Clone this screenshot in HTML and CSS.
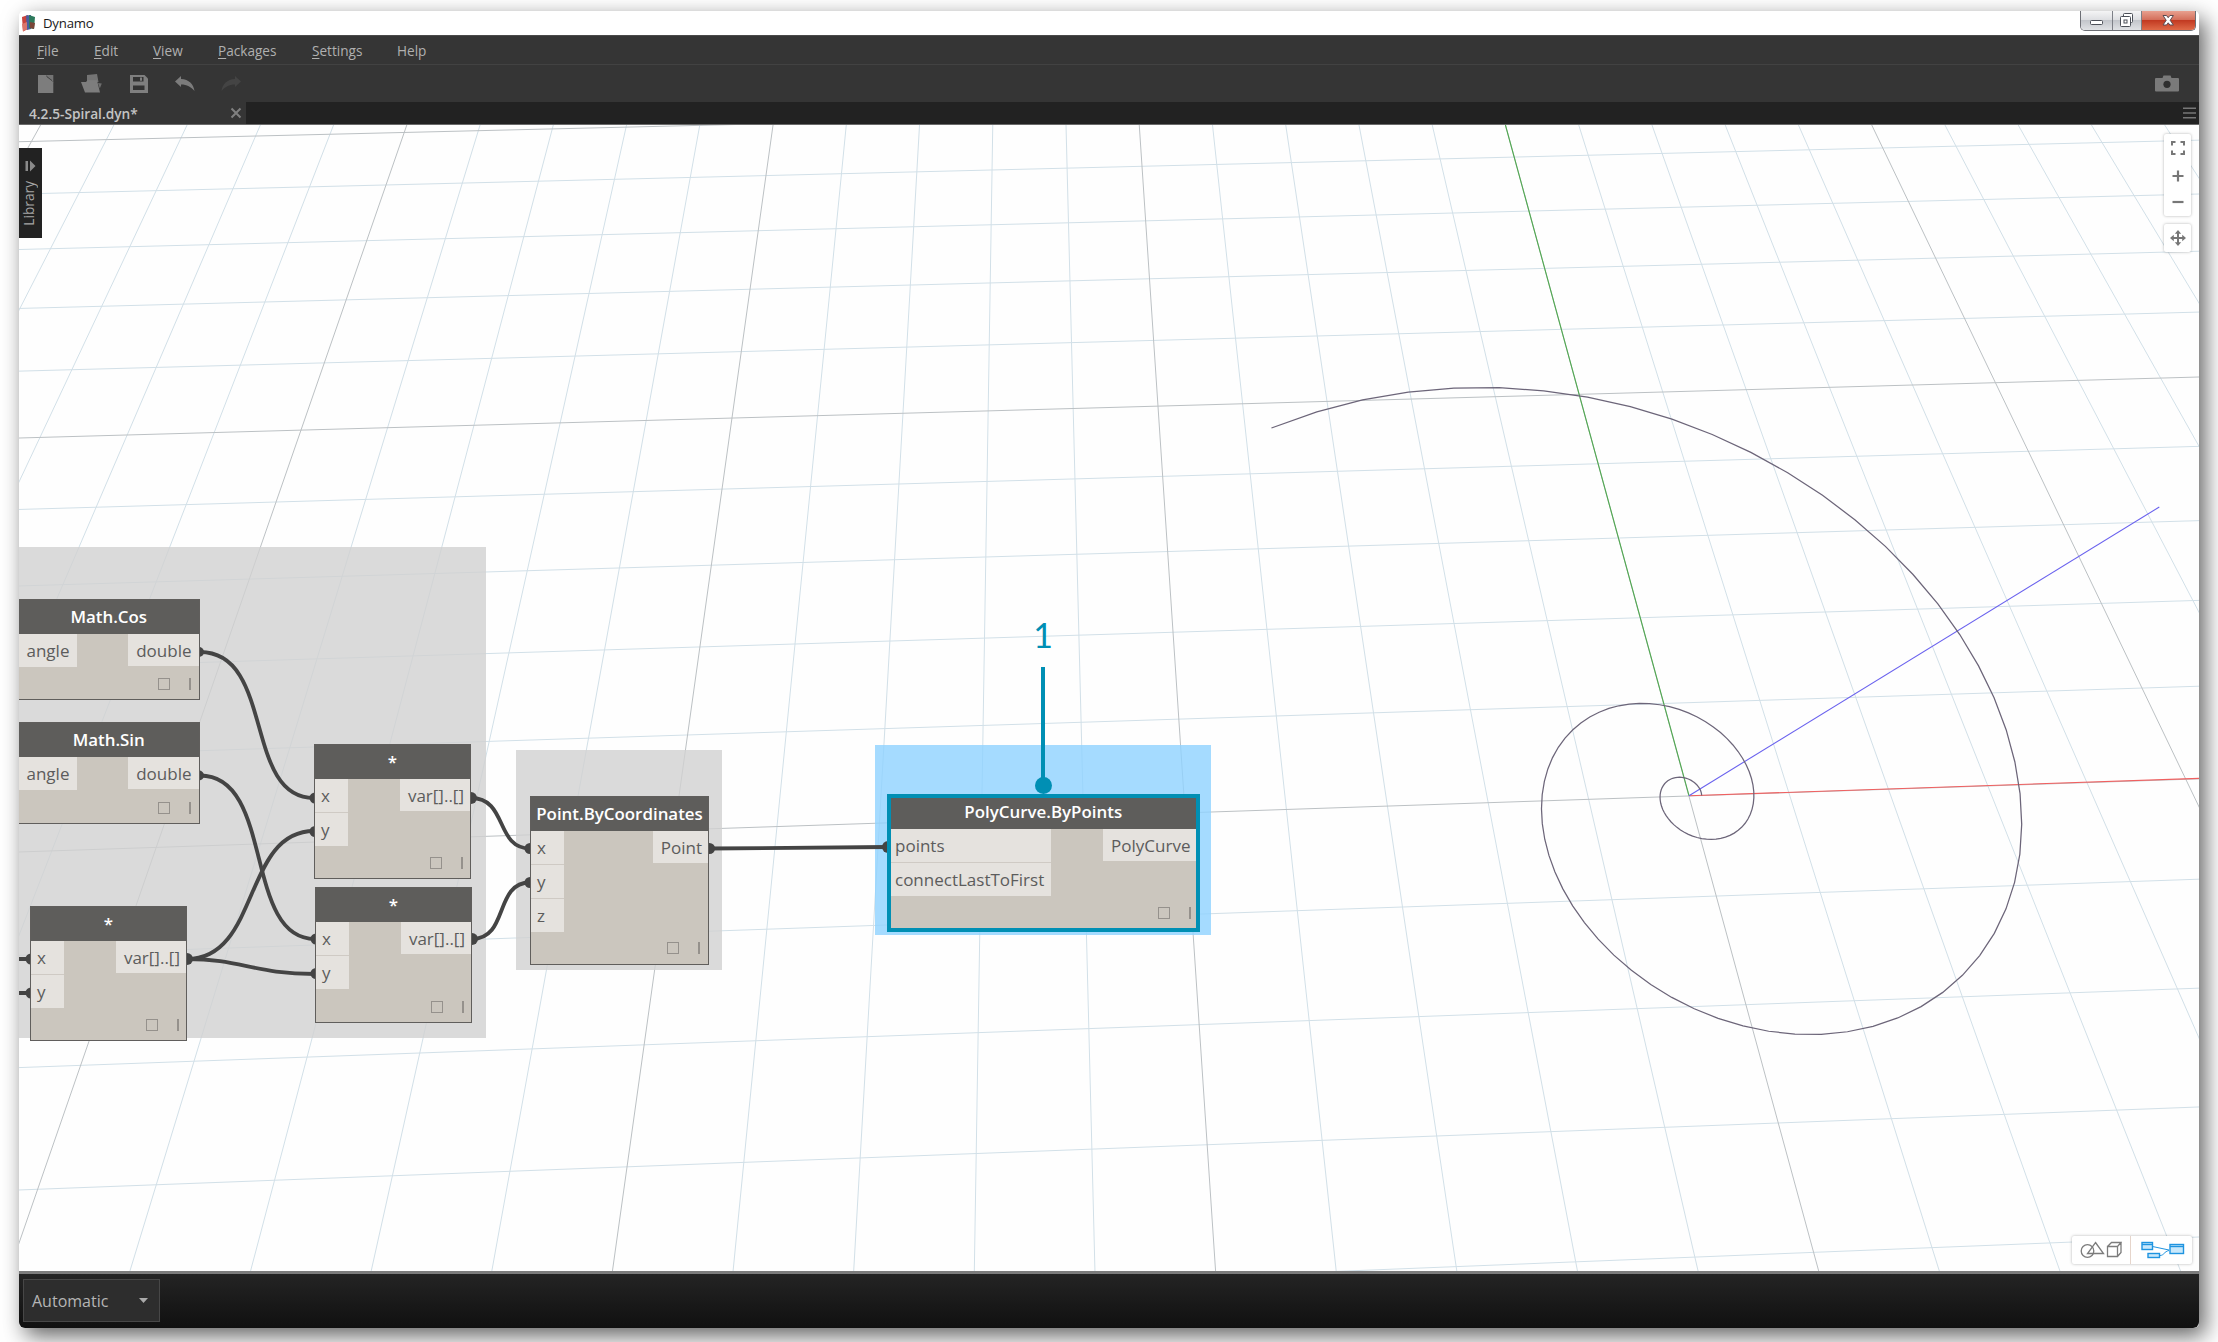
FILE: index.html
```html
<!DOCTYPE html>
<html lang="en">
<head>
<meta charset="utf-8">
<title>Dynamo</title>
<link rel="stylesheet" href="styles.css">
</head>
<body>
<div class="window">
  <header class="titlebar">
    <svg class="app-icon" width="16" height="18" viewBox="0 0 16 18">
      <path d="M1 3 7 1v14l-5 2.500z" fill="#c8433c"/>
      <path d="M5 1.500 10 1v14l-4 1z" fill="#4a5fa0"/>
      <path d="M8 1l6 2-1 12-5-1z" fill="#2d7a5c"/>
      <path d="M1 10l5-2v7l-4 2.500z" fill="#d9756a"/>
      <path d="M9 8l5 1-1 6-4-1z" fill="#7a4538"/>
    </svg>
    <span class="app-name">Dynamo</span>
    <div class="window-buttons">
      <span class="wb wb-min"><svg width="31" height="19" viewBox="1 0 31 19"><rect x="10.500" y="9.500" width="12" height="4" rx="1" fill="#fff" stroke="#4c5058"/></svg></span>
      <span class="wb wb-max"><svg width="28" height="19" viewBox="0 0 28 19"><rect x="10.500" y="2.500" width="9" height="9" rx="1" fill="#fff" stroke="#4c5058"/><rect x="7.500" y="5.500" width="10" height="10" rx="1" fill="#fff" stroke="#4c5058"/><rect x="11" y="9" width="3" height="3" fill="#fff" stroke="#4c5058"/></svg></span>
      <span class="wb wb-close"><svg width="53" height="19" viewBox="1 0 53 19"><path d="M22 4.500h3.500l1.700 2.200 1.700-2.200h3.500l-3.200 4.800 3.200 4.700h-3.500l-1.700-2.200-1.700 2.200H22l3.200-4.700z" fill="#fff" stroke="#5a4a50"/></svg></span>
    </div>
  </header>
  <nav class="menubar">
    <span class="m-file"><u>F</u>ile</span>
    <span class="m-edit"><u>E</u>dit</span>
    <span class="m-view"><u>V</u>iew</span>
    <span class="m-packages"><u>P</u>ackages</span>
    <span class="m-settings"><u>S</u>ettings</span>
    <span>Help</span>
  </nav>
  <div class="toolbar">
    <svg class="tool" width="16" height="18" viewBox="0 0 16 18"><path d="M0 0h8l7.300 7.500V18H0z" fill="#7d7d7d"/><path d="M8 0h7.300v7.500z" fill="#747474"/><path d="M8.500 1.500l5.500 4" stroke="#444" stroke-width="1"/></svg>
    <svg class="tool open" width="22" height="19" viewBox="0 0 22 19"><path d="M6 1l10-1 1.500 8H6z" fill="#747474"/><path d="M0 8h5l1.500-1.800H16l3 12.300H4z" fill="#7d7d7d"/><path d="M17 9l3.800.5-2 5z" fill="#6d6d6d"/></svg>
    <svg class="tool save" width="18" height="18" viewBox="0 0 18 18"><path d="M0 0h14.500L18 3.500V18H0z" fill="#7f7f7f"/><path d="M3 2h10.500v4.500H3zM3 10.500h11.500V15H3z" fill="#333"/><path d="M10 2.500h2v3.300h-2z" fill="#7f7f7f"/></svg>
    <svg class="tool undo" width="20" height="16" viewBox="0 0 20 16"><path d="M0 5.500 6 0v3c8 .5 12.500 5 13.500 12C16 11 12 8.500 6 8.500V11z" fill="#7c7c7c"/></svg>
    <svg class="tool redo" width="20" height="16" viewBox="0 0 20 16"><path d="M20 5.500 14 0v3C6 3.500 1.500 8 .5 15 4 11 8 8.500 14 8.500V11z" fill="#444"/></svg>
    <svg class="camera" width="24" height="17" viewBox="0 0 24 17"><path d="M1 3h6.500L8.500.5h7L16.500 3H23a1 1 0 0 1 1 1v11.500a1 1 0 0 1-1 1H1a1 1 0 0 1-1-1V4a1 1 0 0 1 1-1z" fill="#7a7a7a"/><circle cx="12" cy="9.300" r="3.600" fill="#2f2f2f"/></svg>
  </div>
  <div class="tabs">
    <div class="tab"><span>4.2.5-Spiral.dyn*</span>
      <svg width="12" height="12" viewBox="0 0 12 12"><path d="M1.500 1.500l9 9M10.500 1.500l-9 9" stroke="#808080" stroke-width="2"/></svg>
    </div>
    <svg class="burger" width="13" height="12" viewBox="0 0 13 12"><path d="M0 1.300h13M0 6h13M0 10.700h13" stroke="#777" stroke-width="1.600"/></svg>
  </div>

  <main class="canvas">
    <svg class="scene" viewBox="19 125 2180 1146" width="2180" height="1146">
      <g id="minor" class="minor"></g>
      <g id="major" class="major"></g>
      <path class="axis-x" d="M1689 795.700 2199 778.400"/>
      <path class="axis-y" d="M1689 795.700 1505.400 125"/>
      <path class="axis-z" d="M1689 795.700 2159.300 507"/>
      <polyline id="spiral" class="spiral"/>
    </svg>

    <div class="group group-math"></div>
    <div class="group group-point"></div>
    <div class="group group-curve"></div>

    <svg class="scene" viewBox="19 125 2180 1146" width="2180" height="1146">
      <g class="wires">
        <path d="M200 652C275 652 243 798 314 798"/>
        <path d="M200 775.500C275 775.500 243 939 315 939"/>
        <path d="M187 959C260 959 243 831 314 831"/>
        <path d="M187 959C240 959 255 974 315 974"/>
        <path d="M471 798C508 798 495 848.500 530 848.500"/>
        <path d="M472 939C509 939 494 882.500 530 882.500"/>
        <path d="M709 848.500 887 847"/>
        <path d="M19 959H30M19 993H30"/>
      </g>
      <g class="dots">
        <circle cx="199" cy="652" r="5"/><circle cx="199" cy="775.500" r="5"/>
        <circle cx="315" cy="798" r="5.500"/><circle cx="315" cy="831.500" r="5.500"/>
        <circle cx="316" cy="939" r="5.500"/><circle cx="316" cy="973.500" r="5.500"/>
        <circle cx="31" cy="959" r="5.500"/><circle cx="31" cy="993" r="5.500"/>
        <circle cx="187" cy="959" r="6"/><circle cx="471" cy="798" r="6"/><circle cx="472" cy="939" r="6"/>
        <circle cx="530" cy="848.500" r="5.500"/><circle cx="530" cy="882.500" r="5.500"/>
        <circle cx="709.500" cy="848.500" r="5.500"/><circle cx="888" cy="847" r="6"/>
      </g>
    </svg>

    <section class="node node-cos">
      <h2>Math.Cos</h2>
      <div class="ports"><div class="in"><span>angle</span></div><div class="out"><span>double</span></div></div>
      <footer><i class="box"></i><i class="bar"></i></footer>
    </section>
    <section class="node node-sin">
      <h2>Math.Sin</h2>
      <div class="ports"><div class="in"><span>angle</span></div><div class="out"><span>double</span></div></div>
      <footer><i class="box"></i><i class="bar"></i></footer>
    </section>
    <section class="node node-mul-a">
      <h2>*</h2>
      <div class="ports"><div class="in"><span>x</span><span>y</span></div><div class="out"><span>var[]..[]</span></div></div>
      <footer><i class="box"></i><i class="bar"></i></footer>
    </section>
    <section class="node node-mul-b">
      <h2>*</h2>
      <div class="ports"><div class="in"><span>x</span><span>y</span></div><div class="out"><span>var[]..[]</span></div></div>
      <footer><i class="box"></i><i class="bar"></i></footer>
    </section>
    <section class="node node-mul-c">
      <h2>*</h2>
      <div class="ports"><div class="in"><span>x</span><span>y</span></div><div class="out"><span>var[]..[]</span></div></div>
      <footer><i class="box"></i><i class="bar"></i></footer>
    </section>
    <section class="node node-point">
      <h2>Point.ByCoordinates</h2>
      <div class="ports"><div class="in"><span>x</span><span>y</span><span>z</span></div><div class="out"><span>Point</span></div></div>
      <footer><i class="box"></i><i class="bar"></i></footer>
    </section>
    <section class="node node-curve">
      <h2>PolyCurve.ByPoints</h2>
      <div class="ports"><div class="in"><span>points</span><span>connectLastToFirst</span></div><div class="out"><span>PolyCurve</span></div></div>
      <footer><i class="box"></i><i class="bar"></i></footer>
    </section>

    <div class="callout"><b>1</b><i class="stem"></i><i class="knob"></i></div>

    <aside class="library">
      <svg width="11" height="12" viewBox="0 0 11 12"><path d="M.5 1h2.500v10H.500zM5 .5l5.500 5.500L5 11.500z" fill="#8a8a8a"/></svg>
      <span>Library</span>
    </aside>

    <div class="nav-tools">
      <div class="panel zoom">
        <svg width="14" height="14" viewBox="0 0 14 14"><path d="M1 4.500V1h3.500M9.500 1H13v3.500M13 9.500V13H9.500M4.500 13H1V9.500" fill="none" stroke="#777" stroke-width="2"/></svg>
        <svg width="12" height="12" viewBox="0 0 12 12"><path d="M6 .5v11M.5 6h11" stroke="#777" stroke-width="2.200"/></svg>
        <svg width="12" height="12" viewBox="0 0 12 12"><path d="M.5 6h11" stroke="#777" stroke-width="2.200"/></svg>
      </div>
      <div class="panel pan">
        <svg width="16" height="16" viewBox="0 0 16 16"><path d="M8 2v12M2 8h12" stroke="#777" stroke-width="2"/><path d="M8 0l3.200 3.800H4.800zM8 16l3.200-3.800H4.800zM0 8l3.800-3.200v6.400zM16 8l-3.800-3.200v6.400z" fill="#777"/></svg>
      </div>
    </div>

    <div class="panel views">
      <div><svg width="42" height="18" viewBox="0 0 42 18" fill="none" stroke="#7c7c7c" stroke-width="1.300"><circle cx="7.500" cy="10" r="6.300"/><path d="M15.500 1.500 23.500 12.500h-16zM27.500 5.500h10v10h-10zM27.500 5.500l4-4h9.500l-3.500 4M41 1.500v10l-3.500 4"/></svg></div>
      <div><svg width="44" height="18" viewBox="0 0 44 18" fill="#c9e8fb" stroke="#1f94e0" stroke-width="1.400"><path d="M11.500 5.500 28 9M19 14.500c4 0 4-4 9-5" fill="none" stroke-width="1"/><rect x="1" y="1.500" width="10.500" height="7"/><path d="M1 3.500h10.500"/><rect x="7" y="12.500" width="11.500" height="4"/><rect x="29" y="3.500" width="13.500" height="9"/><path d="M29 5.500h13.500"/></svg></div>
    </div>
  </main>

  <footer class="runbar">
    <div class="run-mode"><span>Automatic</span><svg width="9" height="5" viewBox="0 0 9 5"><path d="M0 0h9L4.500 5z" fill="#aaa"/></svg></div>
  </footer>
</div>
<script src="scene.js"></script>
</body>
</html>
```

FILE: scene.js
```js
// Perspective projection of the ground plane (grid units) to the viewport.
const HORIZON = -1646.5;
const VX = 74481;

function project(x, y) {
  const k = 0.27332 + 0.041346 * x;
  const h = 0.98654 / ((1 + 0.03972 * y) / 2498.5 + k / VX);
  return [(1021.3 + k * h).toFixed(2), (h + HORIZON).toFixed(2)];
}

function addLine(major, a, b) {
  const line = document.createElementNS('http://www.w3.org/2000/svg', 'line');
  line.setAttribute('x1', a[0]);
  line.setAttribute('y1', a[1]);
  line.setAttribute('x2', b[0]);
  line.setAttribute('y2', b[1]);
  document.getElementById(major ? 'major' : 'minor').appendChild(line);
}

for (let i = -25; i <= 15; i++) addLine(i % 5 === 0, project(i, -5), project(i, 12));
for (let j = -4; j <= 11; j++) addLine(j % 5 === 0, project(-25, j), project(15, j));

// Logarithmic spiral sampled as a polycurve.
const points = [];
const END = 14.81;
for (let n = 0; n <= 150; n++) {
  const t = END * n / 150;
  const r = 0.12757 * Math.exp(0.2592 * t);
  points.push(project(r * Math.cos(t), r * Math.sin(t)).join(','));
}
document.getElementById('spiral').setAttribute('points', points.join(' '));
```

FILE: styles.css
```css
* { box-sizing: border-box; }
body {
  margin: 0;
  width: 2218px;
  height: 1342px;
  padding: 11px 19px 0;
  overflow: hidden;
  background: #fff;
  font-family: "Open Sans", "Noto Sans", sans-serif;
}
.window {
  display: flex;
  flex-direction: column;
  width: 2180px;
  height: 1317px;
  border-radius: 5px;
  box-shadow: 6px 8px 22px rgba(0, 0, 0, .62);
}

.titlebar {
  display: flex;
  align-items: center;
  height: 24px;
  padding: 0 3px 0 2px;
  background: #fff;
  border-radius: 5px 5px 0 0;
}
.app-name { margin: -1px 0 0 6px; font-size: 13.200px; letter-spacing: -.2px; color: #1a1a1a; }
.window-buttons {
  display: flex;
  align-self: flex-start;
  margin-left: auto;
  height: 20px;
  border: 1px solid #6d6f75;
  border-top: 0;
  border-radius: 0 0 5px 5px;
  overflow: hidden;
}
.wb { display: flex; background: linear-gradient(#f4f4f5, #dedfe2 45%, #c3c6cb 50%, #e0e2e5); }
.wb + .wb { border-left: 1px solid #7d8087; }
.wb-close { background: linear-gradient(#e8a08f, #d4705c 45%, #c23a22 50%, #df6a48); }

.menubar {
  display: flex;
  align-items: center;
  height: 30px;
  padding: 0 0 0 18px;
  background: #353535;
  border-bottom: 1px solid #424242;
  border-top: 1px solid #4a4a4a;
  font-size: 13.600px;
  color: #b0b0b0;
}
.menubar u { text-decoration-thickness: 1px; text-underline-offset: 2px; }
.m-file { width: 57px; }
.m-edit { width: 59px; }
.m-view { width: 65px; }
.m-packages { width: 94px; }
.m-settings { width: 85px; }

.toolbar {
  display: flex;
  align-items: center;
  height: 37px;
  padding: 0 20px 0 19px;
  background: #353535;
}
.tool.open { margin-left: 27px; }
.tool.save { margin-left: 27px; }
.tool.undo { margin-left: 27px; }
.tool.redo { margin-left: 26px; }
.camera { margin-left: auto; }

.tabs { display: flex; align-items: center; height: 23px; background: #222; border-bottom: 1px solid #6a6a6a; }
.tab {
  display: flex;
  align-items: center;
  justify-content: space-between;
  width: 227px;
  height: 22px;
  padding: 0 4px 0 10px;
  background: #353535;
  font-size: 13.700px;
  font-weight: 600;
  color: #c4c4c4;
}
.burger { margin: 0 3px 0 auto; }

.canvas { position: relative; height: 1146px; overflow: hidden; background: #fefefe; }
.scene { position: absolute; inset: 0; }
.minor { stroke: #d2e0e8; stroke-width: 1; }
.major { stroke: #bcc1c4; stroke-width: 1; }
.axis-x { stroke: #f06060; stroke-width: 1.100; }
.axis-y { stroke: #4fa84f; stroke-width: 1.100; }
.axis-z { stroke: #6a62ee; stroke-width: 1.100; }
.spiral { fill: none; stroke: #6c6579; stroke-width: 1.250; }

.group { position: absolute; background: rgba(209, 209, 209, .8); }
.group-math { left: 0; top: 422px; width: 466.500px; height: 491px; }
.group-point { left: 497px; top: 625px; width: 206px; height: 220px; }
.group-curve { left: 856px; top: 619.500px; width: 336px; height: 190.500px; background: rgba(142, 210, 255, .8); }

.wires path { fill: none; stroke: #444; stroke-width: 3.800; }
.dots { fill: #444; }

.node {
  position: absolute;
  display: flex;
  flex-direction: column;
  background: #cbc6be;
  border: 1px solid #605e5c;
  color: #5c5c5c;
  font-size: 17px;
}
.node h2 {
  height: 34px;
  margin: 0;
  background: #5e5d5b;
  color: #fff;
  font-size: 16.900px;
  font-weight: 600;
  line-height: 34px;
  text-align: center;
  white-space: nowrap;
}
.ports { display: flex; justify-content: space-between; align-items: flex-start; }
.in span, .out span { display: block; height: 33px; line-height: 33px; padding: 0 7px 0 6px; background: #e5e2de; }
.out span { height: 32px; }
.in span + span { height: 34px; border-top: 1px solid #cfcac4; }
.in { min-width: 33px; }
.out span { padding: 0 6px 0 8px; }
.node footer { display: flex; justify-content: flex-end; align-items: center; gap: 19px; margin: auto 8px 9px 0; }
.box { width: 12px; height: 12px; border: 1px solid #95918c; }
.bar { width: 2px; height: 12px; background: #95918c; }
.node-cos { left: -1px; top: 474px; width: 181.500px; height: 101px; }
.node-sin { left: -1px; top: 597px; width: 181.500px; height: 102px; }
.node-cos .in span, .node-sin .in span { padding: 0 8px 0 7.500px; }
.node-cos .out span, .node-sin .out span { padding-right: 7px; }
.node-mul-a { left: 295px; top: 619px; width: 157px; height: 135px; }
.node-mul-b { left: 296px; top: 762px; width: 157px; height: 135.500px; }
.node-mul-c { left: 11px; top: 781px; width: 157px; height: 135px; }
.node-mul-a footer, .node-mul-b footer, .node-mul-c footer { margin-right: 7px; }
.node-point { left: 511px; top: 670.500px; width: 179px; height: 169.500px; }
.node-point footer { margin-bottom: 10px; }
.node-curve { left: 868px; top: 669px; width: 312.500px; height: 138px; border: 4px solid #008fb4; }
.node-curve h2 { height: 31px; line-height: 28px; }
.node-curve .in span { padding-left: 4px; }
.node-curve .out span { padding-right: 5px; }
.node-curve footer { margin: auto 5px 9px 0; }

.callout {
  position: absolute;
  left: 1013px;
  top: 490px;
  display: flex;
  flex-direction: column;
  align-items: center;
  width: 22px;
}
.callout b { height: 52px; font: 400 34px/40px Lato, "Open Sans", sans-serif; color: #008fb4; }
.stem { width: 4px; height: 113px; background: #008fb4; }
.knob { width: 17px; height: 17px; margin-top: -3px; border-radius: 50%; background: #008fb4; }

.library {
  position: absolute;
  left: 0;
  top: 23px;
  display: flex;
  flex-direction: column;
  align-items: center;
  gap: 9px;
  width: 22.500px;
  height: 90px;
  padding-top: 12px;
  background: #222;
  color: #a5a5a5;
  font-size: 13.700px;
}
.library span { writing-mode: vertical-rl; transform: rotate(180deg); line-height: 20px; margin-left: -3px; }

.panel { background: #fff; border-radius: 2px; box-shadow: 0 0 3px rgba(0, 0, 0, .3); }
.nav-tools { position: absolute; right: 8px; top: 9px; display: flex; flex-direction: column; gap: 8px; }
.zoom { display: flex; flex-direction: column; align-items: center; justify-content: space-between; width: 27px; height: 82px; padding: 7px 0 8px; }
.pan { display: flex; align-items: center; justify-content: center; width: 27px; height: 28px; }
.views { position: absolute; right: 7.500px; bottom: 7px; display: flex; width: 119.500px; height: 28px; }
.views div { flex: 1; display: flex; align-items: center; justify-content: center; }
.views div + div { border-left: 1px solid #e6d5cb; padding-left: 3px; }

.runbar {
  display: flex;
  height: 57px;
  padding: 5px 5px 5px 4px;
  border-top: 3px solid #7c7c7c;
  border-radius: 0 0 6px 6px;
  background: linear-gradient(#242424, #101010) padding-box;
}
.run-mode {
  display: flex;
  align-items: center;
  justify-content: space-between;
  width: 137px;
  height: 43px;
  padding: 0 11px 0 8px;
  background: #2d2d2d;
  border: 1px solid #474747;
  color: #b5b5b5;
  font-size: 16px;
}
```
